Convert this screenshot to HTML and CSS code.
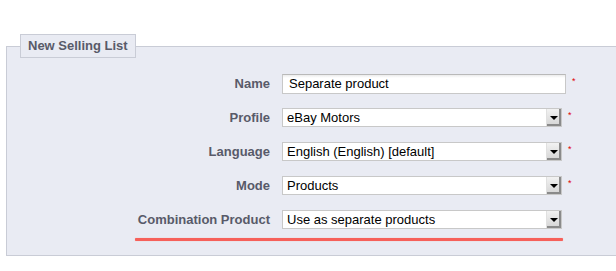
FILE: index.html
```html
<!DOCTYPE html>
<html>
<head>
<meta charset="utf-8">
<link rel="stylesheet" href="styles.css">
</head>
<body>
<fieldset class="panel">
  <legend class="panel-title">New Selling List</legend>
  <div class="form">
    <label class="lbl">Name</label>
    <div class="ctrl">
      <div class="input">Separate product</div>
      <span class="req">*</span>
    </div>
    <label class="lbl">Profile</label>
    <div class="ctrl">
      <div class="select"><span class="val">eBay Motors</span><span class="arrow"></span></div>
      <span class="req">*</span>
    </div>
    <label class="lbl">Language</label>
    <div class="ctrl">
      <div class="select"><span class="val">English (English) [default]</span><span class="arrow"></span></div>
      <span class="req">*</span>
    </div>
    <label class="lbl">Mode</label>
    <div class="ctrl">
      <div class="select"><span class="val">Products</span><span class="arrow"></span></div>
      <span class="req">*</span>
    </div>
    <label class="lbl">Combination Product</label>
    <div class="ctrl">
      <div class="select"><span class="val">Use as separate products</span><span class="arrow"></span></div>
    </div>
  </div>
  <div class="mark"></div>
</fieldset>
</body>
</html>
```

FILE: styles.css
```css
html, body {
  margin: 0;
  padding: 0;
  background: #fff;
  font-family: "Liberation Sans", Arial, sans-serif;
}
.panel {
  position: relative;
  margin: 34px 0 0 6px;
  width: 640px;
  padding: 0 0 25px 0;
  border: 1px solid #c9ccd6;
  background: #e9ebf3;
  box-sizing: border-box;
  min-inline-size: 0;
}
.panel-title {
  margin-left: 13px;
  padding: 3px 7px 4px;
  border: 1px solid #c9ccd6;
  background: #e9ebf3;
  font-weight: bold;
  font-size: 13px;
  line-height: 15px;
  color: #585a69;
}
.form {
  display: grid;
  grid-template-columns: 263px auto;
  column-gap: 12px;
  row-gap: 14px;
  padding-top: 16px;
  align-items: center;
}
.lbl {
  text-align: right;
  font-weight: bold;
  font-size: 13px;
  color: #585a69;
  line-height: 20px;
}
.ctrl {
  display: flex;
  align-items: flex-start;
  height: 20px;
}
.input {
  width: 284px;
  height: 20px;
  box-sizing: border-box;
  border: 1px solid #c8c8c8;
  border-top-color: #b9b9b9;
  background: linear-gradient(#ececec 0, #fff 3px);
  font-size: 13px;
  line-height: 18px;
  padding-left: 6px;
  color: #000;
}
.select {
  width: 280px;
  height: 19px;
  box-sizing: border-box;
  border: 1px solid #c8c8c8;
  background: #fff;
  display: flex;
  align-items: stretch;
  font-size: 13px;
  line-height: 17px;
  color: #000;
}
.val {
  flex: 1;
  padding-left: 4px;
}
.arrow {
  width: 14px;
  position: relative;
  background: linear-gradient(#f2f2f2, #d4d4d4);
  border-left: 1px solid #e0e0e0;
  box-shadow: inset -2px -2px 0 #8a8a8a;
}
.arrow::after {
  content: "";
  position: absolute;
  left: 3px;
  top: 7px;
  border-left: 4px solid transparent;
  border-right: 4px solid transparent;
  border-top: 4px solid #000;
}
.req {
  color: #e00000;
  font-size: 9px;
  line-height: 9px;
  margin-left: 6px;
  margin-top: 3px;
}
.mark {
  position: absolute;
  left: 128px;
  top: 180px;
  width: 428px;
  height: 3px;
  background: #f6605a;
  border-radius: 1px;
  box-shadow: 0 0 1px #f6a09c;
}
```
